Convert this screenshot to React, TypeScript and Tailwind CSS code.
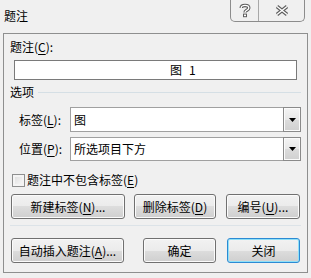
import React from "react";

const font = { fontFamily: '"Noto Sans CJK SC", "Noto Sans", sans-serif' };

function Key({ k }: { k: string }) {
  return <span className="underline underline-offset-[2px] decoration-[1px]">{k}</span>;
}

function Btn({
  children,
  w,
  focused,
}: {
  children: React.ReactNode;
  w: string;
  focused?: boolean;
}) {
  return (
    <div
      className={`${w} h-[25px] flex items-center justify-center whitespace-nowrap rounded-[3px] border bg-[linear-gradient(to_bottom,#f2f2f2_0%,#ebebeb_50%,#dddddd_50%,#cfcfcf_100%)] ${
        focused
          ? "border-[#2b8ad3] shadow-[inset_0_0_0_1px_#8fe0f8]"
          : "border-[#707070] shadow-[inset_0_0_0_1px_#fbfbfb]"
      }`}
    >
      {children}
    </div>
  );
}

function Combo({ value }: { value: string }) {
  return (
    <div className="w-[231px] h-full flex border border-[#a0a0a0] bg-white">
      <div className="flex-1 pl-[3px] flex items-center">{value}</div>
      <div className="w-[18px] -my-px -mr-px border border-[#8a8a8a] flex items-center justify-center bg-[linear-gradient(to_bottom,#f4f4f4_0%,#e8e8e8_50%,#dcdcdc_50%,#d0d0d0_100%)] shadow-[inset_0_0_0_1px_#fbfbfb]">
        <svg width="7" height="4" viewBox="0 0 7 4">
          <path d="M0 0h7L3.5 4z" fill="#000" />
        </svg>
      </div>
    </div>
  );
}

export default function App() {
  return (
    <div
      className="w-[311px] h-[278px] bg-[#f0f0f0] text-[12px] leading-[16px] text-black flex flex-col"
      style={font}
    >
      {/* title bar */}
      <div className="h-[33px] flex items-start">
        <div className="pl-[4px] pt-[8px]">题注</div>
        <div className="ml-auto mr-[6px] flex h-[22px] border border-t-0 border-[#8c8c8c] rounded-b-[5px] overflow-hidden">
          <div className="w-[28px] flex items-center justify-center border-r border-[#a8a8a8]">
            <svg width="12" height="15" viewBox="0 0 12 15">
              <path
                d="M2.2 5 C2.2 1.6 9.8 1.6 9.8 5 C9.8 7.3 6 7.3 6 9.5"
                fill="none"
                stroke="#5e5e5e"
                strokeWidth="3.4"
              />
              <rect x="4" y="10.6" width="4" height="3.6" fill="#5e5e5e" />
              <path
                d="M2.2 5 C2.2 1.6 9.8 1.6 9.8 5 C9.8 7.3 6 7.3 6 9.5"
                fill="none"
                stroke="#ffffff"
                strokeWidth="1.3"
              />
              <rect x="5" y="11.6" width="2" height="1.6" fill="#ffffff" />
            </svg>
          </div>
          <div className="w-[45px] flex items-center justify-center">
            <svg width="14" height="11" viewBox="0 0 14 11">
              <path d="M2 1.5 L12 9.5 M12 1.5 L2 9.5" stroke="#5e5e5e" strokeWidth="3.6" />
              <path d="M2 1.5 L12 9.5 M12 1.5 L2 9.5" stroke="#ffffff" strokeWidth="1.4" />
            </svg>
          </div>
        </div>
      </div>

      {/* panel */}
      <div className="mx-[3px] h-[240px] border border-[#8e8f8f] flex flex-col">
        <div className="mt-[5px] pl-[6px]">
          题注(<Key k="C" />):
        </div>
        <div className="mt-[5px] ml-[10px] w-[283px] h-[20px] border border-[#7a7a7a] bg-white pl-[155px] flex items-center">
          <span>图</span>
          <span className="ml-[7px]">1</span>
        </div>

        <div className="mt-[4px] pl-[6px] pr-[6px] flex items-center gap-[4px]">
          <span>选项</span>
          <div className="flex-1 h-px bg-[#d5dfe5]" />
        </div>

        <div className="mt-[7px] h-[25px] flex items-center">
          <div className="w-[66px] pl-[15px] whitespace-nowrap">
            标签(<Key k="L" />):
          </div>
          <div className="h-[25px]">
            <Combo value="图" />
          </div>
        </div>

        <div className="mt-[5px] h-[24px] flex items-center">
          <div className="w-[66px] pl-[15px] whitespace-nowrap">
            位置(<Key k="P" />):
          </div>
          <div className="h-[24px]">
            <Combo value="所选项目下方" />
          </div>
        </div>

        <div className="mt-[11px] pl-[8px] flex items-center gap-[2px]">
          <div className="w-[13px] h-[13px] border border-[#8e8f8f] bg-[linear-gradient(135deg,#dcdcdc,#fbfbfb)] shadow-[inset_0_0_0_2px_#f4f4f4]" />
          <span>
            题注中不包含标签(<Key k="E" />)
          </span>
        </div>

        <div className="mt-[6px] pl-[7px] flex">
          <Btn w="w-[114px]">
            新建标签(<Key k="N" />)...
          </Btn>
          <div className="ml-[9px]">
            <Btn w="w-[82px]">
              删除标签(<Key k="D" />)
            </Btn>
          </div>
          <div className="ml-[10px]">
            <Btn w="w-[74px]">
              编号(<Key k="U" />)...
            </Btn>
          </div>
        </div>

        <div className="mt-[6px] mx-[6px] h-px bg-[#dce3e8]" />

        <div className="mt-[12px] pl-[7px] flex">
          <Btn w="w-[113px]">
            自动插入题注(<Key k="A" />)...
          </Btn>
          <div className="ml-[19px]">
            <Btn w="w-[73px]">确定</Btn>
          </div>
          <div className="ml-[11px]">
            <Btn w="w-[73px]" focused>
              关闭
            </Btn>
          </div>
        </div>
      </div>
    </div>
  );
}
